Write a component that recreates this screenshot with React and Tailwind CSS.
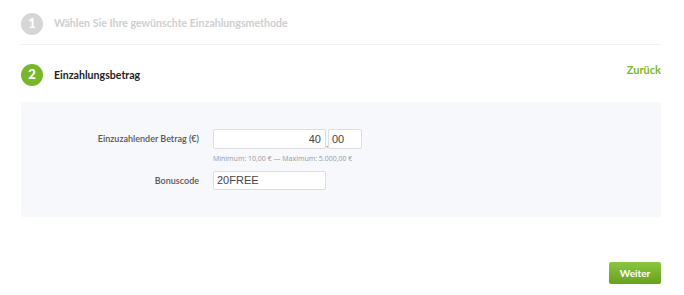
export default function App() {
  const head = { fontFamily: "Lato, 'Open Sans', sans-serif" };
  const body = { fontFamily: "Lato, 'Open Sans', sans-serif" };
  const field = { fontFamily: "'Liberation Sans', Arial, sans-serif" };

  return (
    <div className="w-[684px] h-[295px] bg-white overflow-hidden">
      <div className="ml-[21px] w-[640px]">
        {/* Step 1 */}
        <div className="flex items-center h-[45px] pt-[4px] border-b border-[#f0f0f0]">
          <span
            className="w-[22px] h-[22px] rounded-full bg-[#d6d6d6] text-white flex items-center justify-center text-[13px] font-black"
            style={head}
          >
            1
          </span>
          <span
            className="ml-[11px] text-[10.6px] font-bold text-[#cfcfcf]"
            style={head}
          >
            Wählen Sie Ihre gewünschte Einzahlungsmethode
          </span>
        </div>

        {/* Step 2 */}
        <div className="flex items-start h-[57px] pt-[19px]">
          <span
            className="w-[22px] h-[22px] rounded-full bg-[#78b72a] text-white flex items-center justify-center text-[13px] font-black"
            style={head}
          >
            2
          </span>
          <span
            className="ml-[11px] mt-[4px] text-[10.6px] font-bold text-[#222]"
            style={head}
          >
            Einzahlungsbetrag
          </span>
          <a
            className="ml-auto -mt-[2px] text-[11px] font-bold text-[#7ab929]"
            style={head}
          >
            Zurück
          </a>
        </div>

        {/* Form panel */}
        <div className="bg-[#f7f8fc] h-[115px] pt-[27px]" style={body}>
          <div className="flex items-center">
            <label className="w-[178px] text-right text-[9px] font-semibold text-[#555]">
              Einzuzahlender Betrag (€)
            </label>
            <div className="ml-[14px] flex items-end">
              <div
                className="w-[113px] h-[20px] bg-white border border-[#ddd] rounded-[2px] text-right pr-[4px] text-[11px] leading-[18px] text-[#444]"
                style={field}
              >
                40
              </div>
              <span className="w-[2px] text-[10px] leading-[12px] text-[#999]">,</span>
              <div
                className="w-[34px] h-[20px] bg-white border border-[#ddd] rounded-[2px] pl-[3px] text-[11px] leading-[18px] text-[#444]"
                style={field}
              >
                00
              </div>
            </div>
          </div>
          <div className="ml-[192px] mt-[5px] text-[7px] text-[#999] leading-[10px]" style={{ fontFamily: "'Open Sans', sans-serif" }}>
            Minimum: 10,00 € — Maximum: 5.000,00 €
          </div>
          <div className="flex items-center mt-[7px]">
            <label className="w-[178px] text-right text-[9px] font-semibold text-[#555]">
              Bonuscode
            </label>
            <div
              className="ml-[14px] w-[113px] h-[19px] bg-white border border-[#ddd] rounded-[2px] pl-[3px] text-[11px] leading-[17px] text-[#444]"
              style={field}
            >
              20FREE
            </div>
          </div>
        </div>

        {/* Footer */}
        <div className="flex justify-end pt-[45px]">
          <button
            className="w-[52px] h-[22px] rounded-[2px] bg-gradient-to-b from-[#8cc63f] to-[#68a11d] text-white text-[10px] font-bold"
            style={head}
          >
            Weiter
          </button>
        </div>
      </div>
    </div>
  );
}
